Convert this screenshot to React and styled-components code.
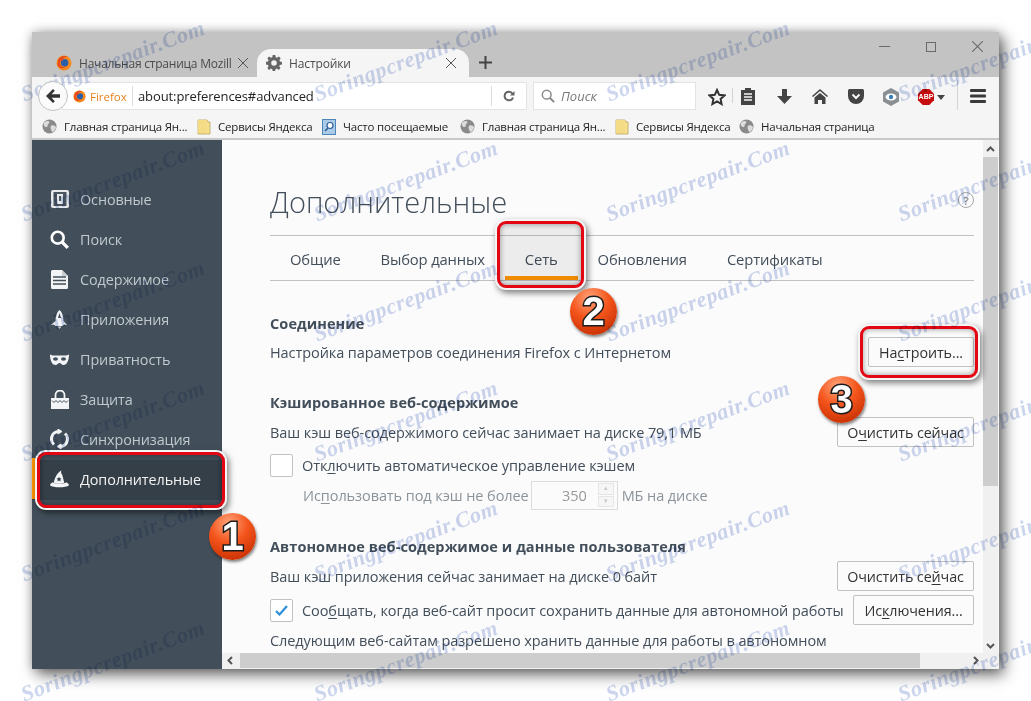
import React from "react";
import styled, { createGlobalStyle } from "styled-components";

const Global = createGlobalStyle`
  html, body { margin: 0; padding: 0; background: #fff; }
  body { width: 1031px; height: 701px; overflow: hidden; font-family: "Open Sans", "Noto Sans", sans-serif; }
  u { text-underline-offset: 2px; text-decoration-thickness: 1px; }
`;

const Page = styled.div`
  position: relative;
  width: 1031px;
  height: 701px;
  padding: 32px;
  box-sizing: border-box;
  overflow: hidden;
`;
const Win = styled.div`
  width: 967px;
  height: 637px;
  display: flex;
  flex-direction: column;
  background: #f5f5f5;
  box-shadow: 5px 6px 14px rgba(0,0,0,.55), 0 0 10px rgba(0,0,0,.25);
  overflow: hidden;
`;
const TabStrip = styled.div`
  height: 45px;
  flex: none;
  background: #c3c3c3;
  display: flex;
  align-items: flex-end;
  padding-left: 14px;
  position: relative;
`;
const Tab = styled.div`
  width: ${p => p.$w}px;
  height: 28px;
  flex: none;
  box-sizing: border-box;
  display: flex;
  align-items: center;
  padding: 0 ${p => p.$pr}px 0 ${p => p.$pl}px;
  gap: 7px;
  font-size: 12px;
  letter-spacing: -.12px;
  color: #4b4b4b;
  white-space: nowrap;
  background: ${p => (p.$active ? "#f5f5f5" : "transparent")};
  border-radius: ${p => (p.$active ? "14px 14px 0 0" : "0")};
`;
const TabTitle = styled.span`
  flex: 1;
  overflow: hidden;
  letter-spacing: ${p => (p.$tight ? "-.22px" : "-.12px")};
`;
const WinControls = styled.div`
  position: absolute;
  top: 9px;
  right: 16px;
  display: flex;
  gap: 36px;
  align-items: center;
`;
const NavBar = styled.div`
  height: 38px;
  flex: none;
  background: #f5f5f5;
  display: flex;
  align-items: center;
  padding-left: 6px;
  position: relative;
`;
const BackBtn = styled.div`
  width: 30px;
  height: 30px;
  flex: none;
  box-sizing: border-box;
  border: 1px solid #c2c2c2;
  border-radius: 50%;
  background: #fbfbfb;
  display: flex;
  align-items: center;
  justify-content: center;
  position: relative;
  z-index: 1;
`;
const UrlBar = styled.div`
  width: 465px;
  height: 28px;
  flex: none;
  margin-left: -6px;
  background: #fff;
  border: 1px solid #e3e3e3;
  box-sizing: border-box;
  display: flex;
  align-items: center;
  padding-left: 10px;
  font-size: 13px;
  color: #222;
`;
const Identity = styled.span`
  display: flex;
  align-items: center;
  gap: 4px;
  font-size: 11.5px;
  color: #e8821e;
  width: 59px;
  height: 20px;
  border-right: 1px solid #ddd;
  margin-right: 5px;
  flex: none;
`;
const UrlText = styled.span`
  flex: 1;
  letter-spacing: -.1px;
`;
const Reload = styled.span`
  width: 34px;
  height: 20px;
  border-left: 1px solid #ddd;
  display: flex;
  align-items: center;
  justify-content: center;
`;
const SearchBar = styled.div`
  width: 163px;
  height: 28px;
  flex: none;
  margin-left: 6px;
  background: #fff;
  border: 1px solid #e3e3e3;
  box-sizing: border-box;
  display: flex;
  align-items: center;
  gap: 6px;
  padding-left: 7px;
  font-size: 13px;
  font-style: italic;
  color: #7a7a7a;
`;
const ToolIcon = styled.span`
  position: absolute;
  left: ${p => p.$x}px;
  top: ${p => p.$y}px;
  display: flex;
`;
const Bookmarks = styled.div`
  height: 25px;
  flex: none;
  box-sizing: border-box;
  background: #f5f5f5;
  border-bottom: 2px solid #c8c8c8;
  display: flex;
  align-items: center;
  padding-left: 10px;
  font-size: 11.5px;
  letter-spacing: -.2px;
  color: #1d1d1d;
`;
const Bookmark = styled.span`
  display: flex;
  align-items: center;
  gap: 7px;
  width: ${p => p.$w}px;
  flex: none;
  white-space: nowrap;
  & > svg { flex: none; }
`;
const Main = styled.div`
  flex: 1;
  display: flex;
  min-height: 0;
`;
const Sidebar = styled.div`
  width: 190px;
  flex: none;
  background: #424f5a;
  padding-top: 40px;
  box-sizing: border-box;
`;
const SideItem = styled.div`
  height: 40px;
  display: flex;
  align-items: center;
  padding: 0 0 2px 18px;
  box-sizing: border-box;
  gap: 11px;
  font-size: 14.4px;
  letter-spacing: -.1px;
  color: ${p => (p.$active ? "#f2f2f2" : "#c1c8ce")};
  background: ${p => (p.$active ? "#343f48" : "transparent")};
  position: relative;
`;
const ActiveMark = styled.span`
  position: absolute;
  left: 0;
  top: -2px;
  bottom: 1px;
  width: 3px;
  background: #ff9500;
`;
const IconSlot = styled.span`
  width: 19px;
  height: 20px;
  flex: none;
  display: flex;
  align-items: center;
  justify-content: center;
`;
const ContentCol = styled.div`
  flex: 1;
  display: flex;
  flex-direction: column;
  min-width: 0;
`;
const ContentRow = styled.div`
  flex: 1;
  display: flex;
  min-height: 0;
`;
const Pane = styled.div`
  flex: 1;
  background: #fbfbfb;
  overflow: hidden;
  box-sizing: border-box;
  padding: 43px 9px 0 48px;
  color: #424e5a;
  font-size: 14.5px;
  letter-spacing: -.08px;
`;
const TitleRow = styled.div`
  height: 52px;
  display: flex;
  align-items: flex-start;
  justify-content: space-between;
`;
const Title = styled.h1`
  margin: 0;
  font-size: 29px;
  line-height: 38px;
  font-weight: 300;
  letter-spacing: 0;
  color: #424e5a;
`;
const Help = styled.span`
  width: 16px;
  height: 16px;
  box-sizing: border-box;
  border: 1px solid #a8a8a8;
  border-radius: 50%;
  color: #999;
  font-size: 11px;
  font-weight: 700;
  display: flex;
  align-items: center;
  justify-content: center;
  margin: 9px 0 0;
`;
const TabsBar = styled.div`
  height: 46px;
  box-sizing: border-box;
  border-top: 1px solid #c1c1c1;
  border-bottom: 1px solid #c1c1c1;
  display: flex;
  padding-left: 20px;
  gap: 40px;
`;
const PrefTab = styled.div`
  height: 44px;
  box-sizing: border-box;
  padding-top: 12px;
  line-height: 22px;
  font-size: 14.8px;
  letter-spacing: -.15px;
  position: relative;
  &::after {
    content: "";
    display: ${p => (p.$active ? "block" : "none")};
    position: absolute;
    left: -20px;
    right: -20px;
    bottom: 0;
    height: 4px;
    background: #ff9500;
  }
`;
const SectionTitle = styled.div`
  font-weight: 700;
  font-size: 14.5px;
  letter-spacing: .08px;
  line-height: 20px;
  margin-top: ${p => p.$mt}px;
`;
const Row = styled.div`
  display: flex;
  align-items: center;
  justify-content: space-between;
  height: ${p => p.$h}px;
  margin-top: ${p => p.$mt || 0}px;
  white-space: nowrap;
`;
const Btn = styled.div`
  width: ${p => p.$w}px;
  height: 30px;
  box-sizing: border-box;
  flex: none;
  background: #fbfbfb;
  border: 1px solid #c1c1c1;
  border-radius: 2px;
  display: flex;
  align-items: center;
  justify-content: center;
  color: #333;
  font-size: 14.3px;
`;
const CheckWrap = styled.div`
  display: flex;
  align-items: center;
  gap: 9px;
`;
const Box = styled.span`
  width: 23px;
  height: 23px;
  box-sizing: border-box;
  background: #fff;
  border: 1px solid #c1c1c1;
  border-radius: 2px;
  display: flex;
  align-items: center;
  justify-content: center;
`;
const Indented = styled.div`
  display: flex;
  align-items: center;
  padding-left: 33px;
  color: #8b939a;
  height: 28px;
  margin-top: 4px;
  white-space: nowrap;
`;
const NumberInput = styled.span`
  width: 87px;
  height: 29px;
  margin: 0 4px 0 2px;
  box-sizing: border-box;
  border: 1px solid #dcdcdc;
  display: flex;
  align-items: center;
  justify-content: flex-end;
  color: #999;
  padding-right: 3px;
  gap: 11px;
  background: #fbfbfb;
`;
const Spinner = styled.span`
  width: 16px;
  height: 24px;
  display: flex;
  flex-direction: column;
  gap: 1px;
`;
const SpinCell = styled.span`
  flex: 1;
  background: #f6f6f6;
  border: 1px solid #e6e6e6;
  color: #c9c9c9;
  font-size: 6px;
  line-height: 9px;
  text-align: center;
`;
const VScroll = styled.div`
  width: 16px;
  flex: none;
  background: #f0f0f0;
  display: flex;
  flex-direction: column;
  position: relative;
  border-right: 1px solid #f8f8f8;
  box-sizing: border-box;
`;
const VThumb = styled.div`
  height: 329px;
  margin-top: 17px;
  background: #cdcdcd;
`;
const ScrollArrow = styled.span`
  position: absolute;
  display: flex;
  ${p => p.$pos}
`;
const HScroll = styled.div`
  height: 16px;
  flex: none;
  background: #f0f0f0;
  padding-left: 18px;
  position: relative;
`;
const HThumb = styled.div`
  width: 680px;
  height: 15px;
  background: #cdcdcd;
`;
const Highlight = styled.div`
  position: absolute;
  left: ${p => p.$x}px;
  top: ${p => p.$y}px;
  width: ${p => p.$w}px;
  height: ${p => p.$h}px;
  box-sizing: border-box;
  border: 3px solid #e30613;
  border-radius: 9px;
  background: ${p => (p.$tint ? "rgba(0,0,0,.06)" : "transparent")};
  box-shadow: 0 0 0 2px #f4f4f4, 2px 3px 6px 2px rgba(0,0,0,.5), inset 0 0 5px 1px rgba(0,0,0,.3);
  pointer-events: none;
`;
const Badge = styled.div`
  position: absolute;
  left: ${p => p.$x}px;
  top: ${p => p.$y}px;
  width: 47px;
  height: 47px;
  border-radius: 50%;
  background: radial-gradient(circle at 42% 22%, #ffa57c 0%, #f4551c 42%, #cf3506 78%, #a82800 100%);
  box-shadow: 1px 2px 3px rgba(0,0,0,.5);
  display: flex;
  align-items: center;
  justify-content: center;
  font-family: "Liberation Sans", sans-serif;
  font-weight: 700;
  font-size: 40px;
  color: #fff;
  -webkit-text-stroke: 3px #1c1c1c;
  paint-order: stroke fill;
`;
const Water = styled.div`
  position: absolute;
  left: ${p => p.$x}px;
  top: ${p => p.$y}px;
  width: 200px;
  margin-left: -100px;
  margin-top: -15px;
  text-align: center;
  transform: rotate(-20.5deg);
  font-family: "Liberation Serif", serif;
  font-style: italic;
  font-weight: 700;
  font-size: 22px;
  line-height: 30px;
  letter-spacing: .6px;
  white-space: nowrap;
  color: #ccd6ee;
  mix-blend-mode: multiply;
  pointer-events: none;
`;
const Abp = styled.span`
  position: absolute;
  left: 886px;
  top: 16px;
  width: 16px;
  text-align: center;
  color: #fff;
  font-family: "Liberation Sans", sans-serif;
  font-weight: 700;
  font-size: 7px;
  line-height: 8px;
`;
const ToolDivider = styled.span`
  position: absolute;
  left: ${p => p.$x}px;
  top: ${p => p.$y}px;
  height: ${p => p.$h}px;
  width: 1px;
  background: #d4d4d4;
`;
const PlusWrap = styled.span`
  display: flex;
  margin: 0 0 8px 10px;
`;

const FirefoxIcon = ({ s = 15 }) => (
  <svg width={s} height={s} viewBox="0 0 16 16">
    <circle cx="8" cy="8" r="7.500" fill="#f58a1f" />
    <circle cx="8.600" cy="7.800" r="3.800" fill="#2b5ea7" />
    <path d="M2 5 C4 1 9 0 12 2 C8 1.500 6 4 7 6 C5 5.500 3.500 6 4 9 C4.500 12 8 13 11 11 C9 14 3 14 1.500 10 Z" fill="#e8481c" />
  </svg>
);
const Gear = () => (
  <svg width="16" height="16" viewBox="0 0 16 16" fill="#666">
    <path fillRule="evenodd" d="M6.700 0h2.600l.4 2.200 1.300.6L12.900 1.500l1.800 1.800-1.300 1.900.6 1.300 2 .4v2.600l-2.200.4-.6 1.300 1.300 1.900-1.800 1.800-1.900-1.300-1.300.6-.4 2.200H6.700l-.4-2.200-1.300-.6-1.900 1.300-1.800-1.800 1.300-1.900-.6-1.300L0 9.400V6.800l2-.4.6-1.300L1.300 3.300l1.800-1.800L5 2.800l1.300-.6zM8 5.200a2.800 2.800 0 100 5.600 2.800 2.800 0 000-5.600z" />
  </svg>
);
const CloseX = ({ c = "#555", s = 10 }) => (
  <svg width={s} height={s} viewBox="0 0 10 10" stroke={c} strokeWidth="1"><path d="M0 0L10 10M10 0L0 10" /></svg>
);
const Globe = () => (
  <svg width="15" height="15" viewBox="0 0 16 16">
    <circle cx="8" cy="8" r="7.500" fill="#8a8a8a" />
    <path d="M3 3c2-1 4-1 5 0 0 2-2 2-2 4s-2 2-3 1-2-3 0-5zM10 7c2-1 4 0 5 2-1 3-3 5-4 5-1-2-3-5-1-7z" fill="#dcdcdc" />
  </svg>
);
const Folder = () => (
  <svg width="14" height="16" viewBox="0 0 14 16">
    <path d="M1 1h9l1 2h2v12H1z" fill="#f6e08e" stroke="#b9a45c" strokeWidth=".8" />
    <path d="M1 1h9v13H1z" fill="#f3dc85" />
  </svg>
);
const HistoryIcon = () => (
  <svg width="14" height="16" viewBox="0 0 14 16">
    <rect x=".5" y=".5" width="13" height="15" fill="#a9cbe8" stroke="#4f85b8" />
    <circle cx="8" cy="6.500" r="3" fill="#fff" stroke="#2d5f96" strokeWidth="1.200" />
    <path d="M6 9L3 12" stroke="#2d5f96" strokeWidth="1.600" />
  </svg>
);
const GlassIcon = ({ c = "#8a8a8a", s = 15, w = 2 }) => (
  <svg width={s} height={s} viewBox="0 0 16 16" fill="none" stroke={c} strokeWidth={w}>
    <circle cx="6.500" cy="6.500" r="5" /><path d="M10 10l5 5" strokeWidth={w + .6} />
  </svg>
);

const icons = {
  general: (
    <svg width="18" height="18" viewBox="0 0 18 18"><rect width="18" height="18" rx="2" fill="#e8eaec" /><rect x="2.500" y="2" width="13" height="14" fill="#4b5661" /><rect x="6" y="4" width="6" height="10" fill="#e8eaec" /><rect x="8" y="6" width="2" height="5" fill="#4b5661" /></svg>
  ),
  search: <GlassIcon c="#fff" s={19} w={2.2} />,
  content: (
    <svg width="17" height="19" viewBox="0 0 17 19"><path d="M0 1.500A1.500 1.500 0 011.500 0H11l6 6v11.500A1.500 1.500 0 0115.500 19h-14A1.500 1.500 0 010 17.500z" fill="#f3f4f5" /><path d="M2 7h13M2 10.500h13M2 14h13" stroke="#424f5a" strokeWidth="1.300" /><path d="M11 0v6h6" fill="#c9ced2" /></svg>
  ),
  apps: (
    <svg width="17" height="19" viewBox="0 0 17 19"><path d="M8.500 0C11 2 12.500 6 12.500 11l3.500 4-3-.5-1.500 1.500h-7L3 14.500 0 15l4.500-4C4.500 6 6 2 8.500 0z" fill="#f3f4f5" /><path d="M8.500 3L7 8h3z" fill="#424f5a" /><path d="M6.500 16.500h4L8.500 19z" fill="#d3d6d9" /></svg>
  ),
  privacy: (
    <svg width="19" height="11" viewBox="0 0 19 11"><path d="M0 .5C3 2 6 1.500 9.500 1.500S16 2 19 .5C19 6 17 11 13.500 11c-2 0-2.500-2-4-2s-2 2-4 2C2 11 0 6 0 .5z" fill="#f3f4f5" /><ellipse cx="5.500" cy="5" rx="2.500" ry="1.700" fill="#424f5a" /><ellipse cx="13.500" cy="5" rx="2.500" ry="1.700" fill="#424f5a" /></svg>
  ),
  security: (
    <svg width="18" height="19" viewBox="0 0 18 19"><path d="M4.500 8V5a4.500 4.500 0 019 0v3" fill="none" stroke="#f3f4f5" strokeWidth="1.800" /><path d="M0 8h18v11H0z" fill="#f3f4f5" /><path d="M1 10.500l2 2 2-2 2 2 2-2 2 2 2-2 2 2 2-2" stroke="#424f5a" fill="none" /></svg>
  ),
  sync: (
    <svg width="19" height="20" viewBox="0 0 19 20" fill="none" stroke="#f3f4f5" strokeWidth="3"><path d="M4 15.500A7.500 7.500 0 018 2.500" /><path d="M15 4.500A7.500 7.500 0 0111 17.500" /><path d="M12 2.500l-4-2.500v5z" fill="#f3f4f5" strokeWidth="1" /><path d="M7 17.500l4 2.500v-5z" fill="#f3f4f5" strokeWidth="1" /></svg>
  ),
  advanced: (
    <svg width="20" height="18" viewBox="0 0 20 18"><path d="M4 13C5 7 8 2 12 0c-1 2 0 3 1 5l2 8c-3 1.500-8 1.500-11 0z" fill="#f3f4f5" /><path d="M9.500 6.500l.8 1.800 1.900.2-1.400 1.300.4 1.900-1.700-1-1.700 1 .4-1.900-1.400-1.300 1.900-.2z" fill="#343f48" /><path d="M3 12.500C1 13.500 0 14.500 0 15.500c3 3 17 3 20 0 0-1-1-2-3-3 0 2-14 2-14 0z" fill="#f3f4f5" /></svg>
  ),
};

const sideItems = [
  ["general", "Основные"], ["search", "Поиск"], ["content", "Содержимое"], ["apps", "Приложения"],
  ["privacy", "Приватность"], ["security", "Защита"], ["sync", "Синхронизация"], ["advanced", "Дополнительные"],
];

const waters = [61, 181, 301, 421, 541, 661].flatMap(y => [113, 406, 698, 990].map(x => [x, y]));

const tools = [
  [676, 11, <svg width="18" height="18" viewBox="0 0 18 18" fill="none" stroke="#333" strokeWidth="2"><path d="M9 2l2.200 4.800 5.300.6-3.900 3.500 1 5.200L9 13.500l-4.600 2.600 1-5.200L1.500 7.400l5.300-.6z" /></svg>],
  [708, 11, <svg width="16" height="17" viewBox="0 0 16 17" fill="#444"><path d="M5 0h6v2h4v15H1V2h4z" /><path d="M4 6h8M4 9h8M4 12h8" stroke="#f5f5f5" strokeWidth="1.300" /></svg>],
  [745, 12, <svg width="15" height="15" viewBox="0 0 15 15" fill="#444"><path d="M5 0h5v7h5l-7.500 8L0 7h5z" /></svg>],
  [780, 12, <svg width="16" height="15" viewBox="0 0 16 15" fill="#444"><path d="M8 0l8 7-1 1-7-6-7 6-1-1z" /><path d="M8 4l5.500 4.500V15H10v-4H6v4H2.500V8.500z" /></svg>],
  [816, 12, <svg width="16" height="15" viewBox="0 0 16 15"><path d="M1.500 0h13A1.500 1.500 0 0116 1.500V7A8 8 0 010 7V1.500A1.500 1.500 0 011.500 0z" fill="#444" /><path d="M4.500 5.500L8 9l3.500-3.500" stroke="#f5f5f5" strokeWidth="2" fill="none" /></svg>],
  [851, 11, <svg width="16" height="18" viewBox="0 0 16 18"><path d="M8 0l8 4.500v9L8 18l-8-4.500v-9z" fill="#8a8f94" /><ellipse cx="8" cy="9" rx="5.500" ry="3.500" fill="#fff" /><circle cx="8" cy="9" r="2.200" fill="#3c7fb4" /></svg>],
  [886, 12, <svg width="16" height="16" viewBox="0 0 16 16"><path d="M4.700 0h6.600L16 4.700v6.600L11.300 16H4.700L0 11.300V4.700z" fill="#c70d0d" /></svg>],
  [905, 18, <svg width="8" height="5" viewBox="0 0 8 5" fill="#444"><path d="M0 0h8L4 5z" /></svg>],
  [938, 12, <svg width="16" height="14" viewBox="0 0 16 14" fill="#3a3a3a"><rect width="16" height="3" rx="1" /><rect y="5.500" width="16" height="3" rx="1" /><rect y="11" width="16" height="3" rx="1" /></svg>],
];

export default function App() {
  return (
    <Page>
      <Global />
      <Win>
        <TabStrip>
          <Tab $w={211} $pl={10} $pr={9}>
            <FirefoxIcon s={16} />
            <TabTitle $tight>Начальная страница Mozill</TabTitle>
            <CloseX />
          </Tab>
          <Tab $w={212} $active $pl={9} $pr={13}>
            <Gear />
            <TabTitle>Настройки</TabTitle>
            <CloseX />
          </Tab>
          <PlusWrap>
            <svg width="13" height="13" viewBox="0 0 13 13" fill="#444"><path d="M5.500 0h2v5.500H13v2H7.500V13h-2V7.500H0v-2h5.500z" /></svg>
          </PlusWrap>
          <WinControls>
            <svg width="11" height="11" viewBox="0 0 11 11" stroke="#6a6a6a"><path d="M0 5.500h11" /></svg>
            <svg width="10" height="10" viewBox="0 0 10 10" fill="none" stroke="#6a6a6a"><rect x=".5" y=".5" width="9" height="9" /></svg>
            <CloseX c="#6a6a6a" s={11} />
          </WinControls>
        </TabStrip>
        <NavBar>
          <BackBtn>
            <svg width="14" height="14" viewBox="0 0 14 14" fill="#333"><path d="M7 0l1.800 1.800L5.600 5.200H14v3.600H5.600l3.200 3.400L7 14 0 7z" /></svg>
          </BackBtn>
          <UrlBar>
            <Identity><FirefoxIcon s={13} />Firefox</Identity>
            <UrlText>about:preferences#advanced</UrlText>
            <Reload>
              <svg width="12" height="12" viewBox="0 0 12 12" fill="none" stroke="#666" strokeWidth="2"><path d="M10 7.500A4.300 4.300 0 116 1.700c2 0 3 1 4 2.500" /><path d="M11.500 1v4.500H7z" fill="#666" stroke="none" /></svg>
            </Reload>
          </UrlBar>
          <SearchBar>
            <GlassIcon c="#8a8a8a" s={14} w={1.7} />
            Поиск
          </SearchBar>
          {tools.map(([x, y, el], i) => <ToolIcon key={i} $x={x} $y={y}>{el}</ToolIcon>)}
          <Abp>ABP</Abp>
          <ToolDivider $x={700} $y={11} $h={15} />
          <ToolDivider $x={925} $y={3} $h={30} />
        </NavBar>
        <Bookmarks>
          <Bookmark $w={155}><Globe />Главная страница Ян...</Bookmark>
          <Bookmark $w={125}><Folder />Сервисы Яндекса</Bookmark>
          <Bookmark $w={138}><HistoryIcon />Часто посещаемые</Bookmark>
          <Bookmark $w={155}><Globe />Главная страница Ян...</Bookmark>
          <Bookmark $w={124}><Folder />Сервисы Яндекса</Bookmark>
          <Bookmark $w={140}><Globe />Начальная страница</Bookmark>
        </Bookmarks>
        <Main>
          <Sidebar>
            {sideItems.map(([k, label]) => (
              <SideItem key={k} $active={k === "advanced"}>
                {k === "advanced" && <ActiveMark />}
                <IconSlot>{icons[k]}</IconSlot>
                {label}
              </SideItem>
            ))}
          </Sidebar>
          <ContentCol>
            <ContentRow>
              <Pane>
                <TitleRow>
                  <Title>Дополнительные</Title>
                  <Help>?</Help>
                </TitleRow>
                <TabsBar>
                  <PrefTab>Общие</PrefTab>
                  <PrefTab>Выбор данных</PrefTab>
                  <PrefTab $active>Сеть</PrefTab>
                  <PrefTab>Обновления</PrefTab>
                  <PrefTab>Сертификаты</PrefTab>
                </TabsBar>
                <SectionTitle $mt={33}>Соединение</SectionTitle>
                <Row $h={30} $mt={3}>
                  <span>Настройка параметров соединения Firefox с Интернетом</span>
                  <Btn $w={106}><span>На<u>с</u>троить...</span></Btn>
                </Row>
                <SectionTitle $mt={26}>Кэшированное веб-содержимое</SectionTitle>
                <Row $h={30} $mt={4}>
                  <span>Ваш кэш веб-содержимого сейчас занимает на диске 79,1 МБ</span>
                  <Btn $w={137}><span>О<u>ч</u>истить сейчас</span></Btn>
                </Row>
                <Row $h={23} $mt={7}>
                  <CheckWrap><Box /><span>Отк<u>л</u>ючить автоматическое управление кэшем</span></CheckWrap>
                </Row>
                <Indented>
                  <span>Ис<u>п</u>ользовать под кэш не более</span>
                  <NumberInput>350<Spinner><SpinCell>▲</SpinCell><SpinCell>▼</SpinCell></Spinner></NumberInput>
                  <span>МБ на диске</span>
                </Indented>
                <SectionTitle $mt={28}>Автономное веб-содержимое и данные пользователя</SectionTitle>
                <Row $h={30} $mt={4}>
                  <span>Ваш кэш приложения сейчас занимает на диске 0 байт</span>
                  <Btn $w={137}><span>Очистить се<u>й</u>час</span></Btn>
                </Row>
                <Row $h={30} $mt={4}>
                  <CheckWrap>
                    <Box>
                      <svg width="13" height="11" viewBox="0 0 13 11" fill="none" stroke="#2f8fd8" strokeWidth="2.200"><path d="M1 6l3.500 3.500L12 1" /></svg>
                    </Box>
                    <span>Соо<u>б</u>щать, когда веб-сайт просит сохранить данные для автономной работы</span>
                  </CheckWrap>
                  <Btn $w={121}><span>Ис<u>к</u>лючения...</span></Btn>
                </Row>
                <Row $h={30}><span>Следующим веб-сайтам разрешено хранить данные для работы в автономном</span></Row>
              </Pane>
              <VScroll>
                <VThumb />
                <ScrollArrow $pos="top: 6px; left: 3px;"><svg width="9" height="6" viewBox="0 0 9 6" fill="none" stroke="#555" strokeWidth="2"><path d="M1 5l3.500-3.500L8 5" /></svg></ScrollArrow>
                <ScrollArrow $pos="bottom: 4px; left: 3px;"><svg width="9" height="6" viewBox="0 0 9 6" fill="none" stroke="#555" strokeWidth="2"><path d="M1 1l3.500 3.500L8 1" /></svg></ScrollArrow>
              </VScroll>
            </ContentRow>
            <HScroll>
              <HThumb />
              <ScrollArrow $pos="top: 3px; left: 5px;"><svg width="6" height="9" viewBox="0 0 6 9" fill="none" stroke="#555" strokeWidth="2"><path d="M5 1L1.500 4.500 5 8" /></svg></ScrollArrow>
              <ScrollArrow $pos="top: 3px; right: 20px;"><svg width="6" height="9" viewBox="0 0 6 9" fill="none" stroke="#555" strokeWidth="2"><path d="M1 1l3.500 3.500L1 8" /></svg></ScrollArrow>
            </HScroll>
          </ContentCol>
        </Main>
      </Win>
      <Highlight $x={37} $y={452} $w={188} $h={56} />
      <Highlight $x={497} $y={221} $w={87} $h={67} $tint />
      <Highlight $x={860} $y={326} $w={118} $h={52} />
      <Badge $x={209} $y={513}>1</Badge>
      <Badge $x={570} $y={288}>2</Badge>
      <Badge $x={818} $y={376}>3</Badge>
      {waters.map(([x, y], i) => <Water key={i} $x={x} $y={y}>Soringpcrepair.Com</Water>)}
    </Page>
  );
}
